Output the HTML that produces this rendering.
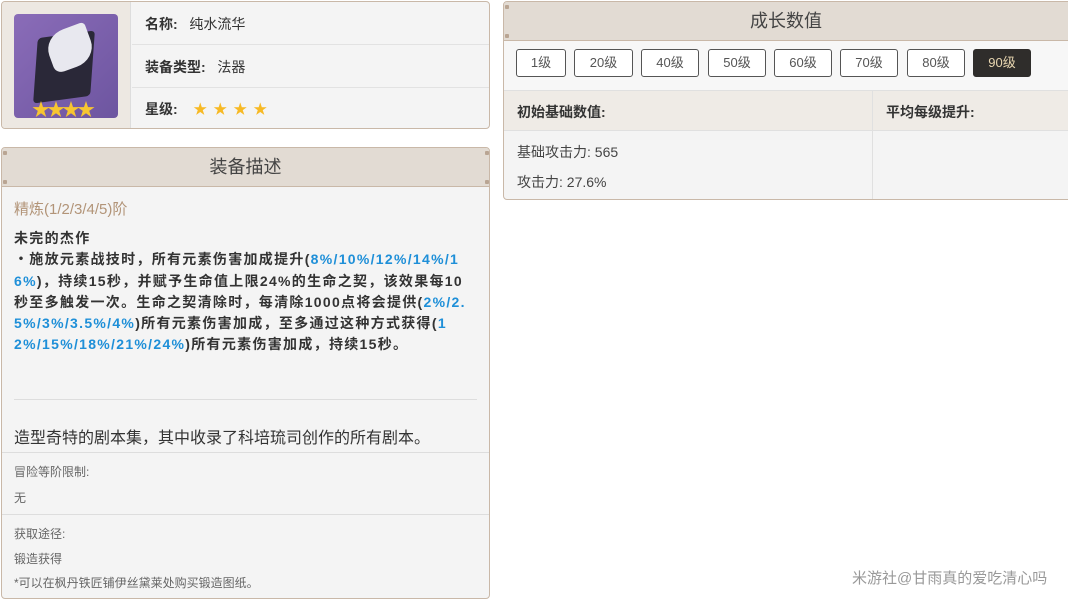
<!DOCTYPE html><html><head><meta charset="utf-8"><style>
*{box-sizing:border-box;margin:0;padding:0}
body{width:1068px;height:600px;background:#fff;font-family:"Liberation Sans","Noto Sans CJK SC",sans-serif;color:#333;position:relative;overflow:hidden}
.a{position:absolute}
.card{border:1px solid #c9b8a8;border-radius:4px;background:#f4f4f4}
.hd{background:#e2dbd3;color:#444;font-size:18px;text-align:center;border-bottom:1px solid #c9b8a8}
.b{color:#1e8fd8}
.btn{position:absolute;top:49px;height:28px;border:1px solid #555;border-radius:3px;background:#fff;font-size:13px;color:#555;text-align:center;line-height:26px}
.dot{position:absolute;width:4px;height:4px;background:#b9a593;border-radius:1px}
</style></head><body>
<div class="a card" style="left:1px;top:1px;width:489px;height:128px;overflow:hidden">
 <div class="a" style="left:0;top:0;width:129px;height:128px;background:#ede8e2;border-right:1px solid #ddd"></div>
 <div class="a" style="left:12px;top:12px;width:104px;height:104px;border-radius:4px;background:linear-gradient(135deg,#8a6cb8,#6d55a0)">
  <div class="a" style="left:22px;top:20px;width:56px;height:66px;background:#2a2838;transform:skew(-12deg) rotate(-8deg);border-radius:4px"></div>
  <div class="a" style="left:34px;top:14px;width:44px;height:40px;background:#e8e8ef;border-radius:50% 10% 50% 20%;transform:rotate(-20deg)"></div>
  <div class="a" style="left:18px;top:82px;font-size:18px;color:#f7c531;letter-spacing:-3px">★★★★</div>
 </div>
 <div class="a" style="left:130px;top:42px;width:360px;height:1px;background:#e2e2e2"></div>
 <div class="a" style="left:130px;top:85px;width:360px;height:1px;background:#e2e2e2"></div>
 <div class="a" style="left:143px;top:12px;font-size:14px"><b>名称:</b>&nbsp;&nbsp; 纯水流华</div>
 <div class="a" style="left:143px;top:55px;font-size:14px"><b>装备类型:</b>&nbsp;&nbsp; 法器</div>
 <div class="a" style="left:143px;top:97px;font-size:14px"><b>星级:</b>&nbsp;&nbsp;&nbsp; <span style="color:#f7b924;font-size:14px;letter-spacing:6px">★★★★</span></div>
</div>
<div class="a card" style="left:1px;top:147px;width:489px;height:452px;overflow:hidden">
 <div class="a hd" style="left:0;top:0;width:487px;height:39px;line-height:38px">装备描述</div>
 <div class="dot" style="left:1px;top:3px"></div><div class="dot" style="left:1px;top:32px"></div><div class="dot" style="left:483px;top:3px"></div><div class="dot" style="left:483px;top:32px"></div>
 <div class="a" style="left:12px;top:50px;font-size:15px;color:#b29478">精炼(1/2/3/4/5)阶</div>
 <div class="a" style="left:12px;top:80px;width:475px;font-size:14px;font-weight:bold;line-height:21.3px;color:#333;white-space:nowrap;letter-spacing:1.3px">未完的杰作<br>・施放元素战技时，所有元素伤害加成提升(<span class="b">8%/10%/12%/14%/1</span><br><span class="b">6%</span>)，持续15秒，并赋予生命值上限24%的生命之契，该效果每10<br>秒至多触发一次。生命之契清除时，每清除1000点将会提供(<span class="b">2%/2.</span><br><span class="b">5%/3%/3.5%/4%</span>)所有元素伤害加成，至多通过这种方式获得(<span class="b">1</span><br><span class="b">2%/15%/18%/21%/24%</span>)所有元素伤害加成，持续15秒。</div>
 <div class="a" style="left:12px;top:251px;width:463px;height:1px;background:#ddd"></div>
 <div class="a" style="left:12px;top:276px;font-size:16px;color:#333">造型奇特的剧本集，其中收录了科培琉司创作的所有剧本。</div>
 <div class="a" style="left:0;top:304px;width:489px;height:1px;background:#ddd"></div>
 <div class="a" style="left:12px;top:315px;font-size:12px;color:#666">冒险等阶限制:</div>
 <div class="a" style="left:12px;top:341px;font-size:12px;color:#666">无</div>
 <div class="a" style="left:0;top:366px;width:489px;height:1px;background:#ddd"></div>
 <div class="a" style="left:12px;top:377px;font-size:12px;color:#666">获取途径:</div>
 <div class="a" style="left:12px;top:402px;font-size:12px;color:#666">锻造获得</div>
 <div class="a" style="left:12px;top:426px;font-size:12px;color:#666">*可以在枫丹铁匠铺伊丝黛莱处购买锻造图纸。</div>
</div>
<div class="a card" style="left:503px;top:1px;width:570px;height:199px;overflow:hidden">
 <div class="a hd" style="left:0;top:0;width:570px;height:39px;line-height:38px;padding-right:6px">成长数值</div>
 <div class="dot" style="left:1px;top:3px"></div><div class="dot" style="left:1px;top:32px"></div>
 <div class="a" style="left:0;top:39px;width:570px;height:50px;background:#f7f7f7;border-bottom:1px solid #e0e0e0"></div>
 <div class="a" style="left:0;top:89px;width:570px;height:40px;background:#efebe6;border-bottom:1px solid #e0e0e0"></div>
 <div class="a" style="left:368px;top:89px;width:1px;height:110px;background:#e0e0e0"></div>
 <div class="a" style="left:13px;top:100px;font-size:14px;font-weight:bold">初始基础数值:</div>
 <div class="a" style="left:382px;top:100px;font-size:14px;font-weight:bold">平均每级提升:</div>
 <div class="a" style="left:13px;top:140px;font-size:14px;color:#444">基础攻击力: 565</div>
 <div class="a" style="left:13px;top:170px;font-size:14px;color:#444">攻击力: 27.6%</div>
</div>
<div class="btn" style="left:516px;width:50px">1级</div>
<div class="btn" style="left:574px;width:59px">20级</div>
<div class="btn" style="left:641px;width:58px">40级</div>
<div class="btn" style="left:708px;width:58px">50级</div>
<div class="btn" style="left:774px;width:58px">60级</div>
<div class="btn" style="left:840px;width:58px">70级</div>
<div class="btn" style="left:907px;width:58px">80级</div>
<div class="btn" style="left:973px;width:58px;background:#2f2d2b;border-color:#2f2d2b;color:#e8d6b0">90级</div>
<div class="a" style="left:852px;top:567px;font-size:15px;color:#999">米游社@甘雨真的爱吃清心吗</div>
</body></html>
